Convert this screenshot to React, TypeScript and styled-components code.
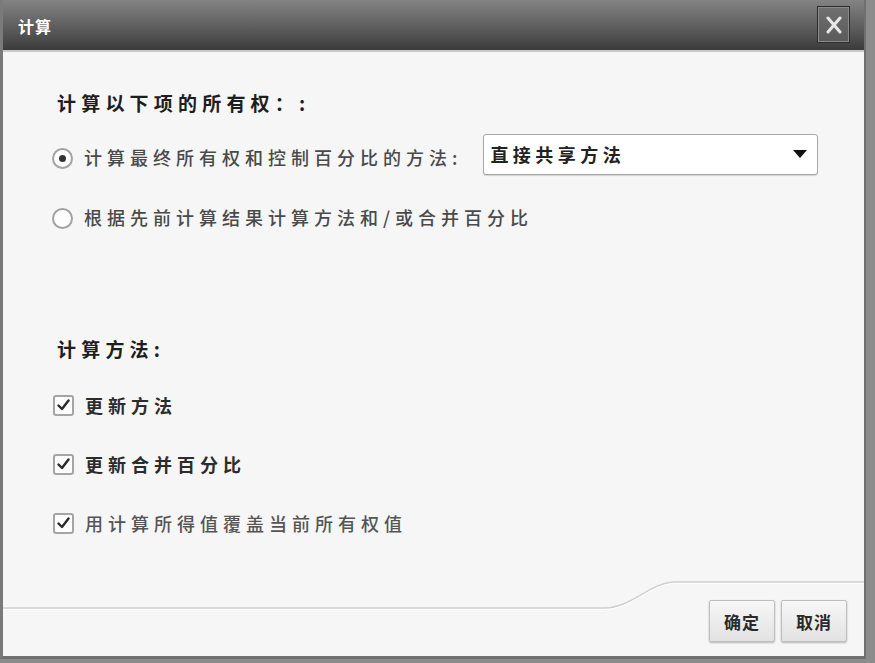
import React from "react";
import styled, { createGlobalStyle } from "styled-components";

const Global = createGlobalStyle`
  html, body { margin: 0; padding: 0; background: #8c8c8c; }
  body { font-family: "Noto Sans CJK SC", "Noto Sans", sans-serif; }
`;

const Dialog = styled.div`
  width: 861px;
  height: 656px;
  background: #f6f6f6;
  border-left: 3px solid #7a7a7a;
  border-right: 2px solid #6f6f6f;
  border-bottom: 3px solid #707070;
  display: flex;
  flex-direction: column;
`;

const TitleBar = styled.div`
  height: 50px;
  flex: none;
  display: flex;
  align-items: center;
  justify-content: space-between;
  padding: 0 14px 0 15px;
  background: linear-gradient(#838383, #5d5d5d 55%, #3b3b3b);
  border-bottom: 2px solid #c9c9c9;
`;

const Title = styled.div`
  color: #fff;
  font-size: 16px;
  font-weight: 700;
  letter-spacing: 1px;
  margin-top: 2px;
`;

const CloseButton = styled.div`
  width: 31px;
  height: 35px;
  margin-top: -1px;
  border: 1px solid #2e2e2e;
  box-shadow: inset 0 0 0 1px #8a8a8a;
  background: linear-gradient(#707070, #5a5a5a);
  display: flex;
  align-items: center;
  justify-content: center;
`;

const Content = styled.div`
  flex: 1;
  padding: 38px 0 0 49px;
  display: flex;
  flex-direction: column;
`;

const Heading = styled.div<{ $gap?: number }>`
  font-size: 19px;
  font-weight: 700;
  color: #1e1e1e;
  letter-spacing: 5.2px;
  line-height: 26px;
  padding-left: 5px;
  margin-top: ${(p) => p.$gap ?? 0}px;
`;

const Row = styled.div<{ $top: number }>`
  display: flex;
  align-items: center;
  height: 42px;
  margin-top: ${(p) => p.$top}px;
`;

const Label = styled.span<{ $tone?: string; $bold?: boolean }>`
  font-size: 18px;
  letter-spacing: 5px;
  color: ${(p) => p.$tone ?? "#4a4a4a"};
  font-weight: ${(p) => (p.$bold ? 700 : 500)};
  margin-left: 11px;
  white-space: nowrap;
`;

const Radio = styled.span<{ $checked?: boolean }>`
  width: 21px;
  height: 21px;
  box-sizing: border-box;
  border-radius: 50%;
  border: 2px solid #a2a2a2;
  background: #fdfdfd;
  display: flex;
  align-items: center;
  justify-content: center;
  margin-top: 3px;
  &::after {
    content: "";
    width: 7px;
    height: 7px;
    border-radius: 50%;
    background: ${(p) => (p.$checked ? "#333" : "transparent")};
  }
`;

const Check = styled.span`
  width: 21px;
  height: 21px;
  box-sizing: border-box;
  border-radius: 3px;
  border: 2px solid #a5a5a5;
  background: #fdfdfd;
  display: flex;
  align-items: center;
  justify-content: center;
  margin-left: 1px;
`;

const Select = styled.div`
  width: 335px;
  height: 41px;
  box-sizing: border-box;
  margin-left: 21px;
  margin-top: -6px;
  background: #fff;
  border: 1px solid #a8a8a8;
  border-radius: 3px;
  box-shadow: 0 1px 1px rgba(0, 0, 0, 0.15);
  display: flex;
  align-items: center;
  justify-content: space-between;
  padding: 0 10px 0 6px;
`;

const SelectText = styled.span`
  font-size: 18px;
  font-weight: 700;
  letter-spacing: 4.5px;
  color: #222;
`;

const Footer = styled.div`
  position: relative;
  height: 76px;
  flex: none;
  display: flex;
  justify-content: flex-end;
  align-items: flex-start;
  gap: 6px;
  padding: 20px 17px 0 0;
  box-sizing: border-box;
`;

const FooterLine = styled.svg`
  position: absolute;
  left: 0;
  top: 0;
  width: 100%;
  height: 32px;
  pointer-events: none;
`;

const Button = styled.button`
  position: relative;
  width: 66px;
  height: 42px;
  border: 1px solid #bdbdbd;
  border-radius: 2px;
  background: linear-gradient(#f7f7f7, #e2e2e2);
  box-shadow: 0 1px 2px rgba(0, 0, 0, 0.25);
  font-family: "Noto Sans CJK SC", sans-serif;
  font-size: 17px;
  font-weight: 700;
  color: #2a2a2a;
  letter-spacing: 1px;
  padding: 0;
`;

const CheckMark = () => (
  <svg width="13" height="12" viewBox="0 0 13 12">
    <path d="M1.5 6.5 L5 10 L11.5 1.5" fill="none" stroke="#2a2a2a" strokeWidth="2.4" strokeLinecap="round" strokeLinejoin="round" />
  </svg>
);

export default function App() {
  return (
    <>
      <Global />
      <Dialog>
        <TitleBar>
          <Title>计算</Title>
          <CloseButton>
            <svg width="16" height="18" viewBox="0 0 16 18">
              <path d="M2 2 L14 16 M14 2 L2 16" stroke="#e8e8e8" strokeWidth="3" strokeLinecap="round" />
            </svg>
          </CloseButton>
        </TitleBar>
        <Content>
          <Heading>计算以下项的所有权：:</Heading>
          <Row $top={20}>
            <Radio $checked />
            <Label>计算最终所有权和控制百分比的方法:</Label>
            <Select>
              <SelectText>直接共享方法</SelectText>
              <svg width="14" height="8" viewBox="0 0 14 8">
                <path d="M0 0 H14 L7 8 Z" fill="#111" />
              </svg>
            </Select>
          </Row>
          <Row $top={18}>
            <Radio />
            <Label>根据先前计算结果计算方法和/或合并百分比</Label>
          </Row>
          <Heading $gap={98}>计算方法:</Heading>
          <Row $top={22}>
            <Check><CheckMark /></Check>
            <Label $tone="#2c2c2c" $bold>更新方法</Label>
          </Row>
          <Row $top={17}>
            <Check><CheckMark /></Check>
            <Label $tone="#2c2c2c" $bold>更新合并百分比</Label>
          </Row>
          <Row $top={17}>
            <Check><CheckMark /></Check>
            <Label $tone="#555">用计算所得值覆盖当前所有权值</Label>
          </Row>
        </Content>
        <Footer>
          <FooterLine viewBox="0 0 861 32" preserveAspectRatio="none">
            <path d="M0 28 L602 28 C628 28 648 2 672 2 L861 2" fill="none" stroke="#cfcfcf" strokeWidth="1.5" />
            <path d="M0 29.5 L602 29.5 C628 29.5 648 3.5 672 3.5 L861 3.5" fill="none" stroke="#ffffff" strokeWidth="1" />
          </FooterLine>
          <Button>确定</Button>
          <Button>取消</Button>
        </Footer>
      </Dialog>
    </>
  );
}
